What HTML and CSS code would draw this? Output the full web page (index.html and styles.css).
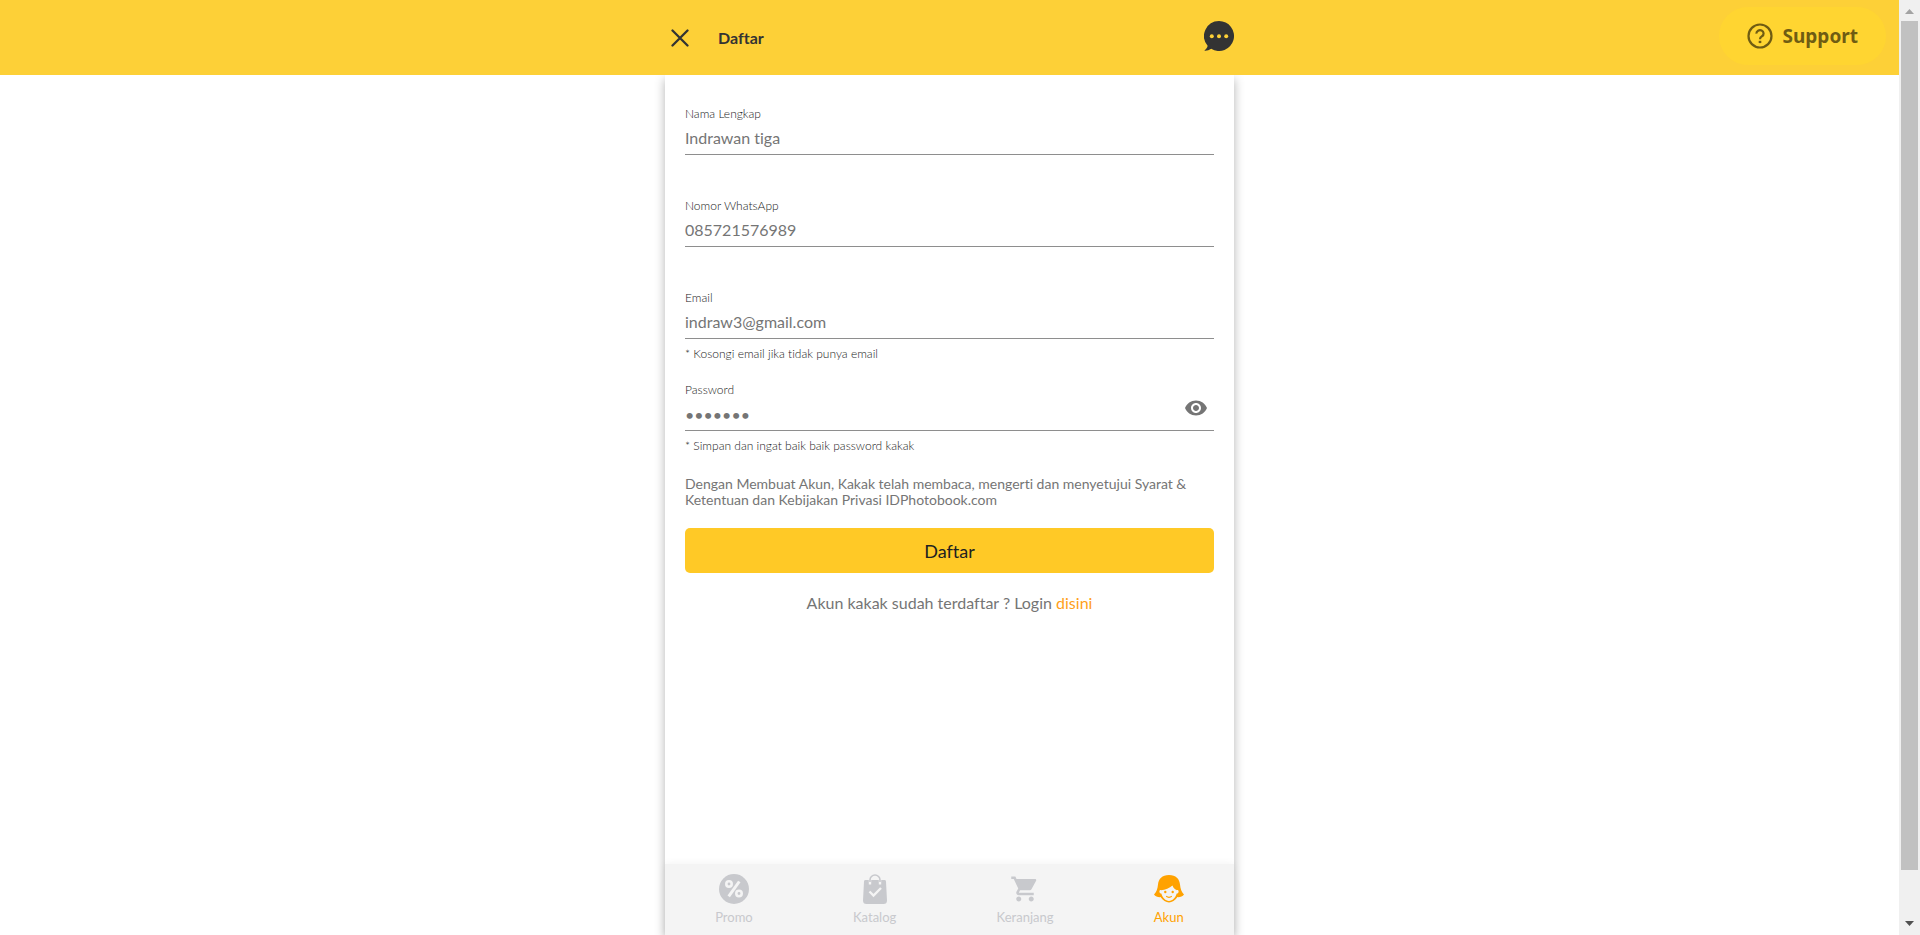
FILE: index.html
```
<!DOCTYPE html>
<html lang="id">
<head>
<meta charset="utf-8">
<title>Daftar</title>
<link rel="stylesheet" href="styles.css">
</head>
<body>
<div class="app">
  <div class="page">
    <header class="topbar">
      <div class="topbar-inner">
        <button class="icon-btn close" type="button" aria-label="Tutup">
          <svg width="18" height="18" viewBox="0 0 18 18"><path d="M1.5 1.5l15 15M16.500 1.500l-15 15" fill="none" stroke="#333" stroke-width="2.300" stroke-linecap="round"/></svg>
        </button>
        <h1 class="title">Daftar</h1>
        <button class="icon-btn chat" type="button" aria-label="Chat">
          <svg width="30" height="30" viewBox="0 0 30 30"><path d="M15 0a15 15 0 1 1-7.800 27.800C5 29.300 2.500 30 .3 29.700 2 28 3.600 26.200 3.600 24.700A15 15 0 0 1 15 0z" fill="#333"/><g fill="#fdd037"><circle cx="7.800" cy="15.200" r="2"/><circle cx="15" cy="15.200" r="2"/><circle cx="22.200" cy="15.200" r="2"/></g></svg>
        </button>
      </div>
      <button class="support" type="button">
        <svg width="26" height="26" viewBox="0 0 26 26" fill="none" stroke="#6f5c13" stroke-width="2.200"><circle cx="13" cy="13" r="11.500"/><path d="M9.400 10.600a3.600 3.300 0 1 1 5.600 2.600c-1.300.9-2 1.400-2 3"/><path d="M13 17.800v2.300" stroke-width="2.600"/></svg>
        <span>Support</span>
      </button>
    </header>
    <main class="panel">
      <form class="form">
        <div class="field">
          <label for="nama">Nama Lengkap</label>
          <input id="nama" type="text" value="Indrawan tiga">
        </div>
        <div class="field">
          <label for="wa">Nomor WhatsApp</label>
          <input id="wa" type="tel" value="085721576989">
        </div>
        <div class="field">
          <label for="email">Email</label>
          <input id="email" type="email" value="indraw3@gmail.com">
          <p class="hint">* Kosongi email jika tidak punya email</p>
        </div>
        <div class="field">
          <label for="password">Password</label>
          <div class="password-row">
            <input id="password" type="password" value="rahasia">
            <button class="icon-btn eye" type="button" aria-label="Tampilkan password">
              <svg width="24" height="24" viewBox="0 0 24 24"><path fill="#757575" d="M12 4.500C7 4.500 2.730 7.610 1 12c1.730 4.390 6 7.500 11 7.500s9.270-3.110 11-7.500c-1.730-4.390-6-7.500-11-7.500zM12 17c-2.760 0-5-2.240-5-5s2.240-5 5-5 5 2.240 5 5-2.240 5-5 5zm0-8c-1.660 0-3 1.340-3 3s1.340 3 3 3 3-1.340 3-3-1.340-3-3-3z"/></svg>
            </button>
          </div>
          <p class="hint">* Simpan dan ingat baik baik password kakak</p>
        </div>
        <p class="terms">Dengan Membuat Akun, Kakak telah membaca, mengerti dan menyetujui Syarat &amp; Ketentuan dan Kebijakan Privasi IDPhotobook.com</p>
        <button class="submit" type="submit">Daftar</button>
        <p class="login">Akun kakak sudah terdaftar ? Login <a href="#login">disini</a></p>
      </form>
      <nav class="tabs">
        <a href="#promo">
          <svg width="30" height="30" viewBox="0 0 30 30"><circle cx="15" cy="15" r="15" fill="#c8c9cd"/><g fill="none" stroke="#f4f4f4" stroke-width="2.600"><circle cx="10" cy="10" r="2.700"/><circle cx="20" cy="19.500" r="2.700"/><path d="M20.300 7.500L9.700 22.300" stroke-width="3"/></g></svg>
          <span>Promo</span>
        </a>
        <a href="#katalog">
          <svg width="30" height="30" viewBox="0 0 30 30"><path d="M5.500 6h19a1.500 1.500 0 0 1 1.500 1.400L27 26.500a3.500 3.500 0 0 1-3.500 3.500h-17A3.500 3.500 0 0 1 3 26.500L4 7.400A1.500 1.500 0 0 1 5.500 6z" fill="#c8c9cd"/><path d="M10 6v4.500M20 6v4.500M9.500 17.500l4 4 7.500-7.500" fill="none" stroke="#f4f4f4" stroke-width="2.400"/><path d="M10 8V6a5 5 0 0 1 10 0v2" fill="none" stroke="#c8c9cd" stroke-width="1.600"/></svg>
          <span>Katalog</span>
        </a>
        <a href="#keranjang">
          <svg width="30" height="30" viewBox="0 0 24 24"><path fill="#c8c9cd" d="M7 18c-1.100 0-1.990.9-1.990 2S5.900 22 7 22s2-.9 2-2-.9-2-2-2zM1 2v2h2l3.600 7.590-1.350 2.450c-.16.280-.25.610-.25.960 0 1.100.9 2 2 2h12v-2H7.420c-.14 0-.25-.11-.25-.25l.03-.12.900-1.630h7.450c.75 0 1.410-.41 1.750-1.030l3.580-6.490c.08-.14.120-.31.120-.48 0-.55-.45-1-1-1H5.210l-.94-2H1zm16 16c-1.100 0-1.990.9-1.990 2s.89 2 1.990 2 2-.9 2-2-.9-2-2-2z"/></svg>
          <span>Keranjang</span>
        </a>
        <a href="#akun" class="active">
          <svg width="30" height="30" viewBox="0 0 30 30"><path fill="#ffa200" d="M15 1C8 1 4.500 5 4 10.500 3.600 15 2.500 18 0 20.500c1.500 2 4 2.800 6.500 2.600C8.800 26.500 12 28.500 15 28.500s6.200-2 8.500-5.400c2.500.2 5-.6 6.500-2.600-2.500-2.500-3.600-5.500-4-10C25.500 5 22 1 15 1z"/><path fill="#f4f4f4" d="M18.500 11.500c-3 2.700-7.200 4.200-11.500 4.700-.7-.3-1.800.2-1.600 1.600.1 1.200 1 1.900 1.900 1.800C8.600 24 11.500 27 15 27s6.400-3 7.700-7.400c.9.100 1.800-.6 1.900-1.800.2-1.400-.9-1.900-1.600-1.600-2-.7-3.700-2.300-4.500-4.700z"/><g fill="#ffa200"><circle cx="11.300" cy="18" r="1.200"/><circle cx="18.700" cy="18" r="1.200"/></g><path d="M12.200 22.300q2.800 2 5.600 0" stroke="#ffa200" stroke-width="1.200" fill="none"/></svg>
          <span>Akun</span>
        </a>
      </nav>
    </main>
  </div>
  <div class="scrollbar" aria-hidden="true">
    <svg width="9" height="5" viewBox="0 0 9 5"><path d="M0 5L4.500 0 9 5z" fill="#a3a3a3"/></svg>
    <div class="thumb"></div>
    <svg width="9" height="5" viewBox="0 0 9 5"><path d="M0 0l4.500 5L9 0z" fill="#505050"/></svg>
  </div>
</div>
</body>
</html>
```
FILE: styles.css
```
* { box-sizing: border-box; }
body { margin: 0; font-family: Lato, "Liberation Sans", sans-serif; font-variant-ligatures: none; color: #757575; background: #fff; }
h1, p { margin: 0; }
a { text-decoration: none; }
button { font-family: inherit; font-variant-ligatures: inherit; border: 0; padding: 0; background: none; cursor: pointer; }
svg { display: block; }

.app { display: flex; min-height: 100vh; }
.page { flex: 1; display: flex; flex-direction: column; }

.topbar { position: relative; background: #fdd037; }
.topbar-inner { max-width: 569px; height: 75px; margin: 0 auto; padding-left: 6px; display: flex; align-items: center; }
.title { flex: 1; margin-left: 29px; font-size: 16px; line-height: 24px; font-weight: 700; color: #333; }
.chat { margin-bottom: 3px; }
.support { position: absolute; top: 7px; right: 13px; height: 58px; padding: 0 28px; border-radius: 29px; background: #ffd531; display: flex; align-items: center; gap: 10px; font-family: "Noto Sans", sans-serif; font-size: 19px; font-weight: 700; color: #6f5c13; }

.panel { flex: 1; width: 100%; max-width: 569px; margin: 0 auto; display: flex; flex-direction: column; box-shadow: 0 4px 10px rgba(0, 0, 0, 0.3); clip-path: inset(0 -20px); }
.form { flex: 1; padding: 31px 20px 0; }
.field { height: 92px; }
.field label { display: block; font-size: 12px; line-height: 16px; font-weight: 300; color: #222; }
.field input { display: block; width: 100%; height: 33px; padding: 0 0 2px; border: 0; border-bottom: 1px solid #8e8e8e; outline: 0; border-radius: 0; background: transparent; font-family: inherit; font-variant-ligatures: inherit; font-size: 16px; color: #757575; }
.password-row { position: relative; }
.password-row input { padding: 0; }
.eye { position: absolute; right: 6px; top: -2px; }
.hint { margin-top: 7px; font-size: 12px; line-height: 16px; font-weight: 300; color: #222; }
.terms { margin-top: 2px; font-size: 14px; line-height: 16px; }
.submit { display: block; width: 100%; height: 45px; margin-top: 20px; border-radius: 5px; background: #ffc926; font-size: 18px; color: #212121; }
.login { margin-top: 18px; font-size: 16px; line-height: 24px; text-align: center; }
.login a { color: #ff9f1a; }

.tabs { height: 71px; display: flex; justify-content: space-around; background: #f4f4f4; box-shadow: 0 0 8px rgba(0, 0, 0, 0.06); }
.tabs a { display: flex; flex-direction: column; align-items: center; gap: 5px; padding-top: 10px; font-size: 13px; line-height: 16px; color: #c8c9cd; }
.tabs .active { color: #ffa200; }

.scrollbar { width: 21px; padding: 9px 2px; background: #f0f0f0; display: flex; flex-direction: column; align-items: center; }
.thumb { flex: 1; width: 17px; margin: 7px 0 51px; background: #c1c1c1; }
```
